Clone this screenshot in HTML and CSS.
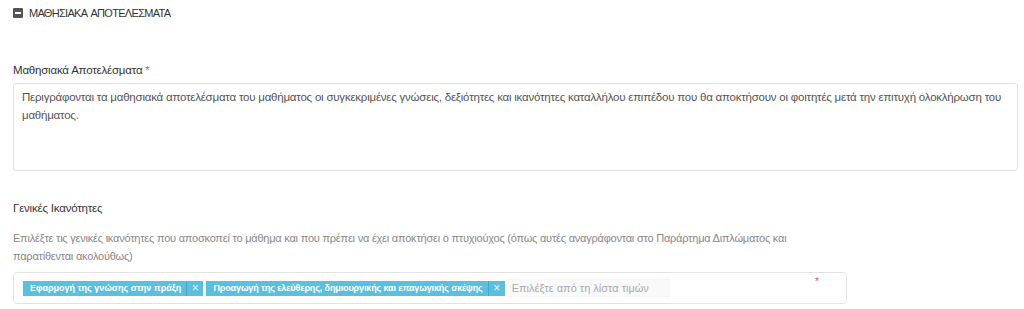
FILE: index.html
```html
<!DOCTYPE html>
<html lang="el">
<head>
<meta charset="utf-8">
<link rel="stylesheet" href="styles.css">
</head>
<body>
<div class="page">
  <div class="section-head">
    <span class="collapse-icon"><span class="bar"></span></span>
    <span class="section-title">ΜΑΘΗΣΙΑΚΑ ΑΠΟΤΕΛΕΣΜΑΤΑ</span>
  </div>

  <div class="field field-outcomes">
    <div class="label">Μαθησιακά Αποτελέσματα <span class="req">*</span></div>
    <div class="textarea"><span class="line">Περιγράφονται τα μαθησιακά αποτελέσματα του μαθήματος οι συγκεκριμένες γνώσεις, δεξιότητες και ικανότητες καταλλήλου επιπέδου που θα αποκτήσουν οι φοιτητές μετά την επιτυχή ολοκλήρωση του</span><br>μαθήματος.</div>
  </div>

  <div class="field field-skills">
    <div class="label">Γενικές Ικανότητες</div>
    <div class="help">Επιλέξτε τις γενικές ικανότητες που αποσκοπεί το μάθημα και που πρέπει να έχει αποκτήσει ο πτυχιούχος (όπως αυτές αναγράφονται στο Παράρτημα Διπλώματος και<br>παρατίθενται ακολούθως)</div>
    <div class="multiselect">
      <span class="chip"><span class="chip-text">Εφαρμογή της γνώσης στην πράξη</span><span class="chip-x">×</span></span>
      <span class="chip chip-long"><span class="chip-text">Προαγωγή της ελεύθερης, δημιουργικής και επαγωγικής σκέψης</span><span class="chip-x">×</span></span>
      <span class="search">Επιλέξτε από τη λίστα τιμών</span>
      <span class="ms-req">*</span>
    </div>
  </div>
</div>
</body>
</html>
```
FILE: styles.css
```css
html, body {
  margin: 0;
  padding: 0;
  background: #fff;
}
.page {
  padding: 0 6px 0 13px;
  font-family: "Liberation Sans", Arial, sans-serif;
  font-size: 12px;
  color: #333;
}
.section-head {
  display: flex;
  align-items: center;
  gap: 6px;
  height: 26px;
}
.collapse-icon {
  width: 10px;
  height: 10px;
  background: #555;
  border-radius: 1px;
  display: flex;
  align-items: center;
  justify-content: center;
}
.collapse-icon .bar {
  width: 6px;
  height: 2px;
  background: #fff;
}
.section-title {
  font-size: 11px;
  letter-spacing: -0.7px;
  word-spacing: 2px;
  color: #333;
}
.field-outcomes {
  margin-top: 36px;
}
.label {
  font-size: 11.5px;
  letter-spacing: -0.2px;
  line-height: 16px;
  color: #333;
}
.req {
  color: #e74c3c;
}
.textarea {
  margin-top: 5px;
  height: 88px;
  box-sizing: border-box;
  border: 1px solid #e3e3e3;
  border-radius: 3px;
  padding: 4px 8px;
  line-height: 18px;
  color: #555;
  font-size: 11.5px;
  letter-spacing: -0.22px;
}
.textarea .line {
  white-space: nowrap;
}
.field-skills {
  margin-top: 29px;
}
.help {
  margin-top: 13px;
  color: #888;
  line-height: 18px;
  font-size: 11px;
  letter-spacing: -0.22px;
}
.multiselect {
  margin-top: 7px;
  width: 834px;
  height: 32px;
  box-sizing: border-box;
  border: 1px solid #e3e3e3;
  border-radius: 4px;
  display: flex;
  align-items: center;
  padding: 0 9px;
  gap: 3px;
  position: relative;
}
.chip {
  display: flex;
  align-items: center;
  height: 15px;
  background: #5bc0de;
  color: #fff;
  font-size: 9px;
  font-weight: 700;
  padding-left: 7px;
}
.chip-long .chip-text {
  letter-spacing: -0.12px;
}
.chip-text {
  padding-right: 5px;
  border-right: 1px solid #4aa6c2;
  line-height: 15px;
}
.chip-x {
  width: 16px;
  text-align: center;
  font-size: 12px;
  font-weight: 400;
  color: #e6f5fa;
}
.search {
  margin-left: 1px;
  width: 161px;
  height: 20px;
  line-height: 20px;
  background: #f9f9f9;
  color: #aaa;
  padding-left: 3px;
  box-sizing: border-box;
  font-size: 11px;
}
.ms-req {
  position: absolute;
  left: 801px;
  top: 3px;
  color: #e74c3c;
  font-size: 10px;
}
```
